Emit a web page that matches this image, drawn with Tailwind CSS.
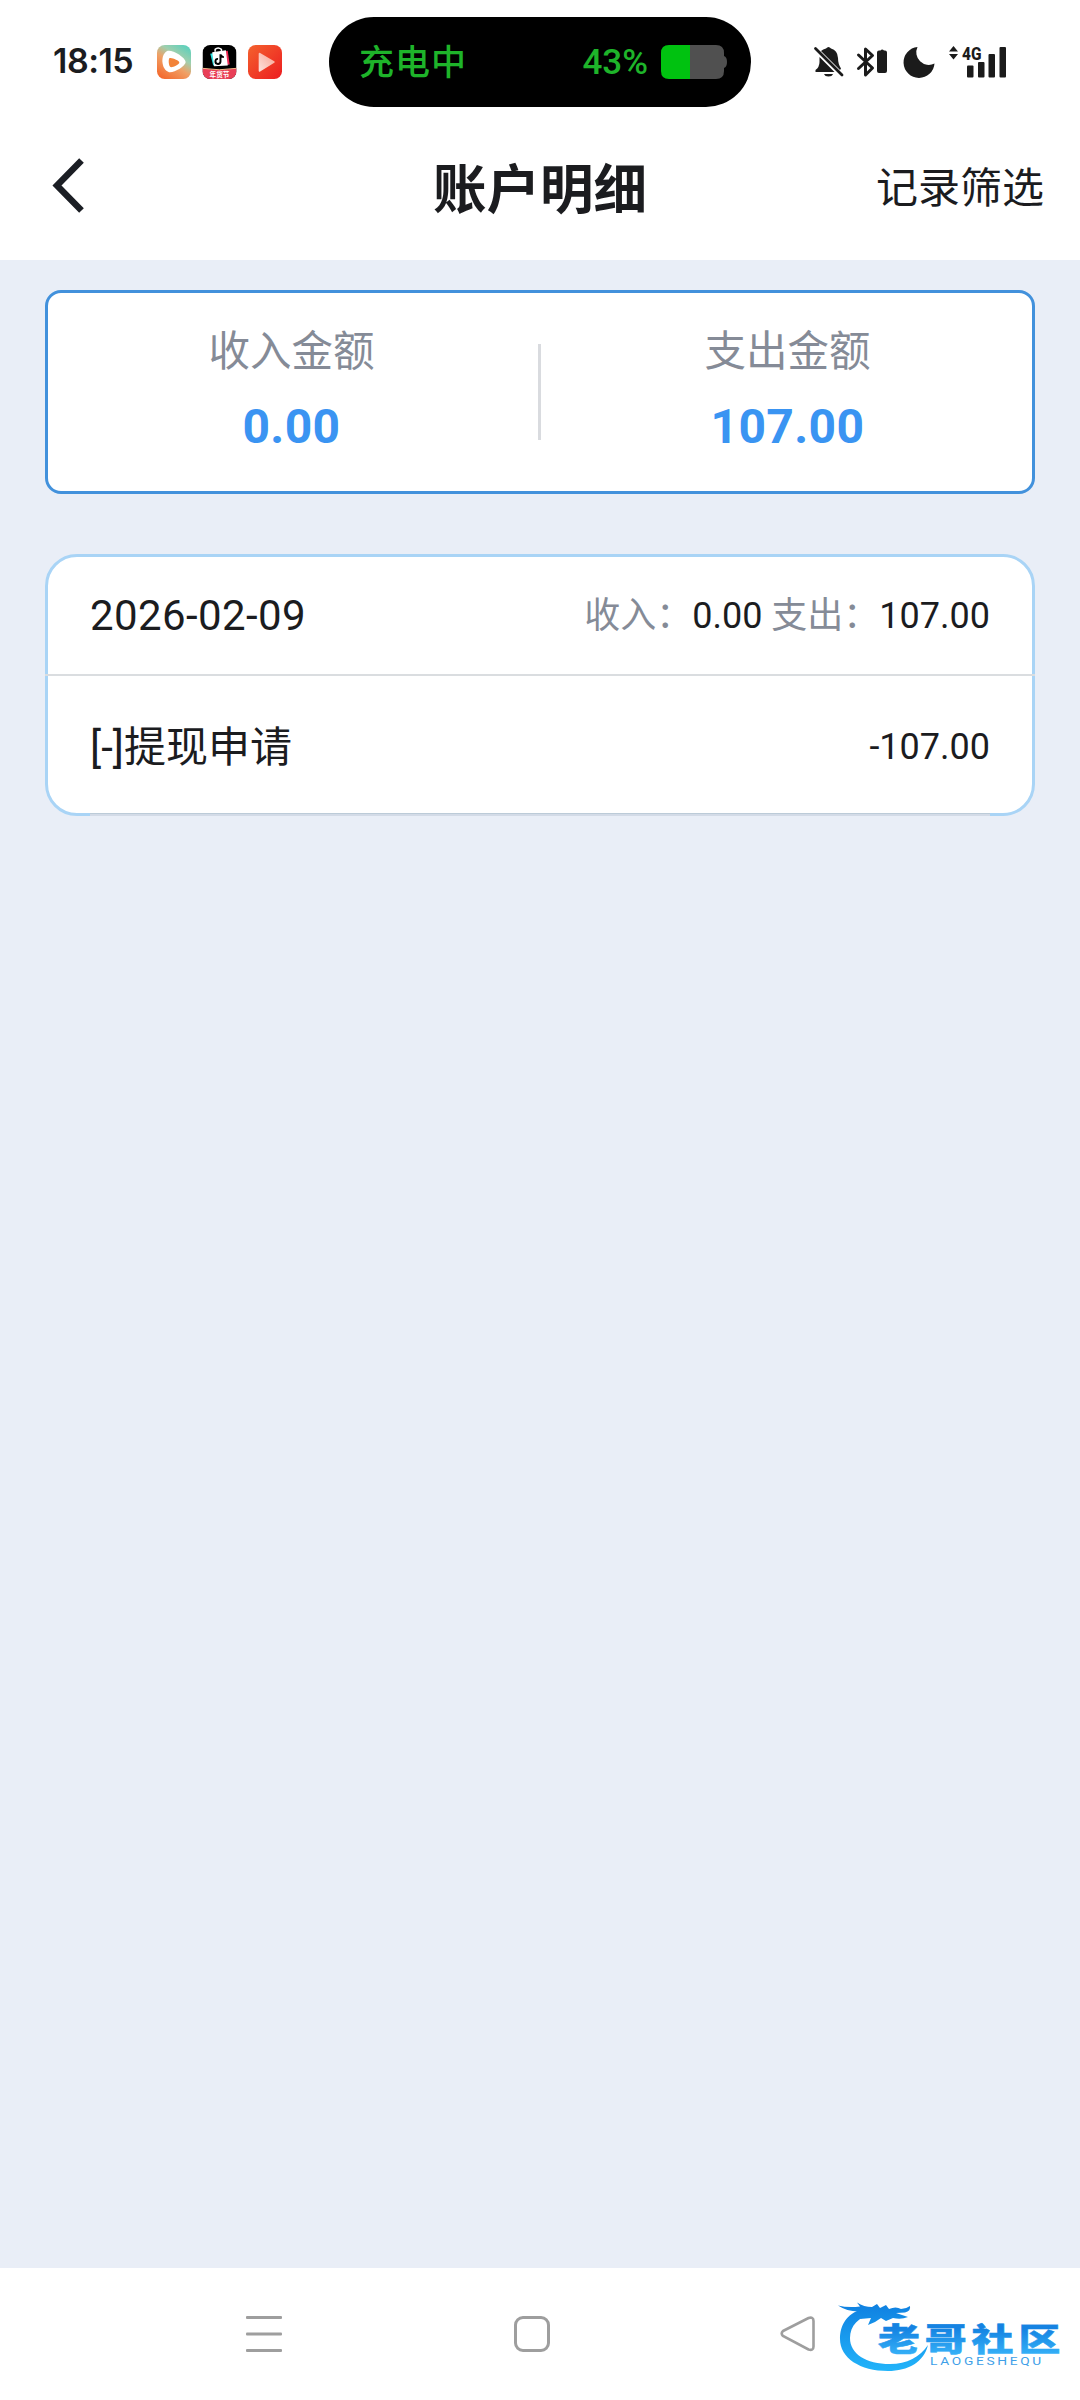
<!DOCTYPE html>
<html lang="zh-CN">
<head>
    <meta charset="UTF-8">
    <meta name="viewport" content="width=device-width, initial-scale=1.0">
    <title>账户明细</title>
    <script src="https://cdn.jsdelivr.net/npm/@tailwindcss/browser@4"></script>
</head>
<body class="flex flex-col w-[1080px] h-[2400px] bg-[#e9eef7] text-[#1b1c1f] font-[Roboto,'Noto_Sans_CJK_SC',sans-serif] overflow-hidden">
    <!-- Status Bar -->
    <div class="flex items-start h-[124px] bg-white pl-[53px]">
        <div class="w-[104px] pt-[37px] text-[34px] leading-[48px] font-semibold tracking-[-0.5px] font-[Inter,sans-serif] whitespace-nowrap">18:15</div>
        <div class="flex w-[172px] pt-[45px] gap-[11px]">
            <svg class="w-[34px] h-[34px]" viewBox="0 0 35 35">
                <defs>
                    <linearGradient id="app1" x1="0.15" y1="1" x2="0.8" y2="0">
                        <stop offset="0" stop-color="#f4672b"/>
                        <stop offset="0.45" stop-color="#f0a065"/>
                        <stop offset="0.7" stop-color="#9fcfae"/>
                        <stop offset="1" stop-color="#5fd0bb"/>
                    </linearGradient>
                </defs>
                <rect width="35" height="35" rx="8" fill="url(#app1)"/>
                <path d="M11 6C15 4.500 29 12 29.500 17.500C29.500 22 17 29 12.500 28C4 26 3 9 11 6Z" fill="#fff"/>
                <path d="M13 13.500C15 12.500 23 16 23 18C23 20 15 24 13.500 22.500C12 21 11.500 14.500 13 13.500Z" fill="#f28338"/>
            </svg>
            <svg class="w-[35px] h-[34px]" viewBox="0 0 35 35">
                <defs><clipPath id="app2"><rect width="35" height="35" rx="8"/></clipPath></defs>
                <g clip-path="url(#app2)">
                    <rect width="35" height="35" fill="#000"/>
                    <path d="M8 9L24 6L27 20L11 21Z" fill="#2de0e0"/>
                    <path d="M11 8L26 6L28 20L14 21Z" fill="#ef2a52"/>
                    <path d="M10 7.500L24 5.500L26 21L12 22Z" fill="#fff"/>
                    <path d="M13 7V4.500Q16 1.500 19.500 4.500V6.500" fill="none" stroke="#fff" stroke-width="1.500"/>
                    <path d="M18.500 9.500V17A2.600 2.600 0 1 1 16 14.300M18.500 10Q19.500 12.500 22 12.500" fill="none" stroke="#000" stroke-width="2"/>
                    <path d="M0 24Q17 27 35 24V35H0Z" fill="#e83f57"/>
                    <path d="M0 24Q17 27 35 24" fill="none" stroke="#f6c08c" stroke-width="1"/>
                    <text x="17.500" y="33" text-anchor="middle" font-size="6.800" font-weight="700" fill="#fff">年货节</text>
                </g>
            </svg>
            <svg class="w-[34px] h-[34px]" viewBox="0 0 35 35">
                <defs>
                    <linearGradient id="app3" x1="0" y1="0" x2="1" y2="1"><stop stop-color="#f4622e"/><stop offset="1" stop-color="#ec1c20"/></linearGradient>
                    <linearGradient id="play" x1="0" y1="1" x2="1" y2="0"><stop stop-color="#fde0da"/><stop offset="1" stop-color="#f9a595"/></linearGradient>
                </defs>
                <rect width="35" height="35" rx="8" fill="url(#app3)"/>
                <path d="M12 9L26.500 17.500L12 26.500Z" fill="url(#play)" stroke="url(#play)" stroke-width="2" stroke-linejoin="round"/>
            </svg>
        </div>
        <!-- Charging island -->
        <div class="flex items-center w-[422px] h-[90px] mt-[17px] pl-[30px] pr-[23px] rounded-full bg-black text-[#1eb42a] text-[35px] leading-[48px] font-medium">
            <span class="tracking-[1px] pt-[4px]">充电中</span>
            <span class="ml-auto mr-[13px] pt-px">43%</span>
            <svg class="w-[67px] h-[34px]" viewBox="0 0 67 34">
                <path d="M29 0H55Q63 0 63 8V11Q66 12 66 17Q66 22 63 23V26Q63 34 55 34H29Z" fill="#505050"/>
                <path d="M29 0H8Q0 0 0 8V26Q0 34 8 34H29Z" fill="#00c210"/>
            </svg>
        </div>
        <svg class="w-[200px] h-[40px] mt-[42px] ml-[59px]" viewBox="810 42 200 40" fill="#1b1b1b">
            <!-- muted bell -->
            <path d="M819.500 57L834.500 72H815.500V70Q819.500 67 819.500 62Z"/>
            <path d="M821 51Q823 49 826 48.500Q828.500 45.500 831 48.500Q837.500 50 838 58Q838 64 841 68.500L840 70Z"/>
            <path d="M824 74H833Q832 76.500 828.500 76.500Q825 76.500 824 74Z"/>
            <path d="M815.500 48.500L842 75" stroke="#1b1b1b" stroke-width="2.800" stroke-linecap="round"/>
            <!-- bluetooth with its battery -->
            <path d="M858.500 55L872.500 68L865.500 75V49L872.500 55.500L858.500 68.500" fill="none" stroke="#1b1b1b" stroke-width="3" stroke-linejoin="round" stroke-linecap="round"/>
            <path d="M879 50.500H880.500Q882 48.500 884 50.500H885Q887 50.500 887 52.500V71Q887 73 885 73H879Q877 73 877 71V52.500Q877 50.500 879 50.500Z"/>
            <!-- moon -->
            <path d="M917.500 47A15.500 15.500 0 1 0 934.500 63.500A12.500 12.500 0 0 1 917.500 47Z"/>
            <!-- signal -->
            <path d="M949 51.500L953.500 46L958 51.500ZM949 54H958L953.500 59.500Z"/>
            <text x="962" y="59.500" font-size="18" font-weight="800" textLength="19.500" lengthAdjust="spacingAndGlyphs">4G</text>
            <rect x="967" y="65.500" width="6.500" height="12" rx="1"/>
            <rect x="978" y="62" width="6.500" height="15.500" rx="1"/>
            <rect x="988.500" y="54" width="6.500" height="23.500" rx="1"/>
            <rect x="999.500" y="47" width="6.500" height="30.500" rx="1"/>
        </svg>
    </div>

    <!-- Header -->
    <header class="grid grid-cols-3 items-center h-[136px] bg-white pl-[52px] pr-[36px] pb-[8px]">
        <svg class="w-[34px] h-[56px] -ml-px -mt-[5px]" viewBox="0 0 34 56" fill="none" stroke="#1b1e24" stroke-width="6.500">
            <path d="M30.500 2.500L6 27.500L30.500 52.500"/>
        </svg>
        <h1 class="pt-[5px] text-[53.500px] leading-[80px] font-bold text-center whitespace-nowrap -ml-[16px]">账户明细</h1>
        <span class="text-[42px] leading-[60px] pt-px text-right">记录筛选</span>
    </header>

    <main class="flex-1 px-[45px] pt-[30px]">
        <!-- Totals -->
        <section class="flex items-center h-[204px] rounded-[16px] border-3 border-[#4291dc] bg-white text-center">
            <div class="w-[490px] pr-[3px] pb-[5px]">
                <p class="text-[41.500px] leading-[60px] text-[#858b97]">收入金额</p>
                <p class="text-[48px] leading-[60px] mt-[15px] font-bold text-[#3a94f2] tracking-[0.4px]">0.00</p>
            </div>
            <div class="w-[3px] h-24 bg-[#d9dbdf]"></div>
            <div class="flex-1 pl-[2px] pb-[5px]">
                <p class="text-[41.500px] leading-[60px] text-[#858b97]">支出金额</p>
                <p class="text-[48px] leading-[60px] mt-[15px] font-bold text-[#3a94f2] tracking-[0.4px]">107.00</p>
            </div>
        </section>

        <!-- Daily records -->
        <section class="relative h-[262px] mt-[60px] rounded-[32px] border-3 border-[#a9d4f6] bg-white">
            <div class="flex items-center justify-between h-[117px] px-[42px]">
                <span class="text-[42px] leading-[60px] tracking-[0.4px]">2026-02-09</span>
                <span class="text-[36px] leading-[60px]"><span class="text-[#858b97]">收入：</span>0.00 <span class="text-[#858b97]">支出：</span>107.00</span>
            </div>
            <div class="h-[2px] -mx-[3px] bg-[#dadde0]"></div>
            <div class="flex items-center justify-between h-[140px] px-[42px]">
                <span class="text-[42px] leading-[60px] pt-[3px]">[-]提现申请</span>
                <span class="text-[36px] leading-[60px] pt-[2px]">-107.00</span>
            </div>
            <div class="absolute left-[42px] right-[42px] -bottom-[3px] h-[3px] border-t border-[#bccbd8] bg-[#d3dbe7]"></div>
        </section>
    </main>

    <!-- Navigation Bar -->
    <nav class="flex items-start h-[132px] bg-white pl-[246px] pt-[48px]">
        <svg class="w-9 h-9" viewBox="0 0 36 36" fill="#9e9e9e">
            <rect width="36" height="3" rx="1"/>
            <rect y="16.500" width="36" height="3" rx="1"/>
            <rect y="33" width="36" height="3" rx="1"/>
        </svg>
        <div class="w-9 h-9 ml-[232px] rounded-[9px] border-3 border-[#9e9e9e]"></div>
        <svg class="w-9 h-9 ml-[230px]" viewBox="0 0 36 36" fill="none" stroke="#9e9e9e" stroke-width="2.600">
            <path d="M3 15L28.500 2Q33.500 0.500 33.500 5V30.500Q33.500 35 28.500 33.500L3 20Q0.500 17.500 3 15Z"/>
        </svg>
        <!-- Community logo -->
        <svg class="w-[230px] h-[90px] -mt-[20px] ml-[18px]" viewBox="834 2296 230 90">
            <defs>
                <linearGradient id="logo" gradientUnits="userSpaceOnUse" x1="0" y1="2302" x2="0" y2="2371">
                    <stop offset="0" stop-color="#0f7fe0"/>
                    <stop offset="1" stop-color="#22b4fa"/>
                </linearGradient>
                <linearGradient id="word" x1="0" y1="0" x2="0" y2="1">
                    <stop offset="0.2" stop-color="#1583e2"/>
                    <stop offset="0.9" stop-color="#35b0f7"/>
                </linearGradient>
            </defs>
            <path d="M862 2309C846 2314 840 2326 840 2339C840 2358 860 2371 888 2371C908 2371 924 2362 928 2345C920 2357 907 2364 890 2364C866 2364 850 2354 850 2338C850 2326 858 2317 874 2313Z" fill="url(#logo)"/>
            <path d="M838 2305.500Q848 2308 860 2306.500L857 2302.500Q864 2307 872 2307L877 2304L880 2308L886 2305L889 2309Q896 2306 901 2309Q906 2309 910 2306Q911 2311 905 2312.500L896 2313L908 2317Q901 2320 893 2318L886 2321L881 2318L875 2322L868 2325L871 2318L860 2319L865 2311Q849 2313 838 2305.500Z" fill="url(#logo)"/>
            <g transform="translate(878 2350.500) scale(1.330 1)">
                <text x="0" y="0" font-size="31.500" font-weight="900" letter-spacing="3.700" fill="url(#word)" stroke="url(#word)" stroke-width="0.500">老哥社区</text>
            </g>
            <g transform="translate(930 2364.500) scale(1.250 1)">
                <text x="0" y="0" font-size="11" fill="#3f9fe8" textLength="89" lengthAdjust="spacing">LAOGESHEQU</text>
            </g>
        </svg>
    </nav>
</body>
</html>
